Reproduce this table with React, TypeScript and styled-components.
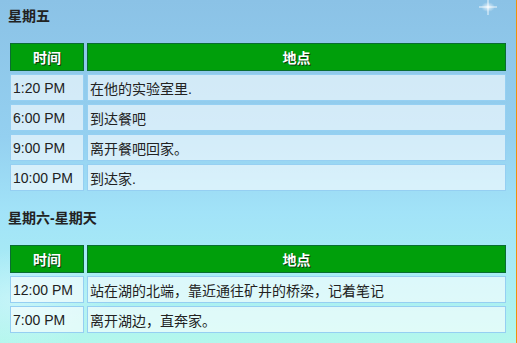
import styled, { createGlobalStyle } from 'styled-components'

const GlobalStyle = createGlobalStyle`
  html, body {
    margin: 0;
    padding: 0;
  }
  body {
    font-family: 'Liberation Sans', 'Noto Sans CJK SC', sans-serif;
  }
`

type Row = { time: string; place: string }

const friday: Row[] = [
  { time: '1:20 PM', place: '在他的实验室里.' },
  { time: '6:00 PM', place: '到达餐吧' },
  { time: '9:00 PM', place: '离开餐吧回家。' },
  { time: '10:00 PM', place: '到达家.' },
]

const weekend: Row[] = [
  { time: '12:00 PM', place: '站在湖的北端，靠近通往矿井的桥梁，记着笔记' },
  { time: '7:00 PM', place: '离开湖边，直奔家。' },
]

const Schedule = ({ title, rows, first }: { title: string; rows: Row[]; first?: boolean }) => (
  <>
    <DayTitle $first={first}>{title}</DayTitle>
    <Table>
      <thead>
        <tr>
          <HeadCell $time>时间</HeadCell>
          <HeadCell>地点</HeadCell>
        </tr>
      </thead>
      <tbody>
        {rows.map((r) => (
          <tr key={r.time}>
            <Cell>{r.time}</Cell>
            <Cell>{r.place}</Cell>
          </tr>
        ))}
      </tbody>
    </Table>
  </>
)

const App = () => {
  return (
    <>
      <GlobalStyle />
      <Page>
        <Sparkle viewBox="0 0 30 20">
          <defs>
            <radialGradient id="glow">
              <stop offset="0" stopColor="#ffffff" stopOpacity="0.8" />
              <stop offset="1" stopColor="#ffffff" stopOpacity="0" />
            </radialGradient>
          </defs>
          <ellipse cx="15" cy="10" rx="7" ry="5" fill="url(#glow)" />
          <rect x="6" y="9.4" width="18" height="1.2" fill="#ffffff" opacity="0.7" />
          <rect x="14.4" y="2" width="1.2" height="16" fill="#ffffff" opacity="0.7" />
        </Sparkle>
        <Schedule title="星期五" rows={friday} first />
        <Schedule title="星期六-星期天" rows={weekend} />
      </Page>
    </>
  )
}

const Page = styled.div`
  position: relative;
  box-sizing: border-box;
  width: 517px;
  height: 343px;
  overflow: hidden;
  padding: 6px 10px 0 8px;
  border-right: 1px solid #f0900a;
  background:
    radial-gradient(ellipse 90px 50px at 20px 300px, rgba(220, 248, 255, 0.55), rgba(220, 248, 255, 0) 100%),
    linear-gradient(
      to bottom,
      #8bc2e6 0%,
      #94d0f0 40%,
      #a2e3f8 62%,
      #a9edf4 82%,
      #b3f7ec 100%
    );
`

const Sparkle = styled.svg`
  position: absolute;
  top: -3px;
  right: 13px;
  width: 30px;
  height: 20px;
`

const DayTitle = styled.h3<{ $first?: boolean }>`
  margin: ${(p) => (p.$first ? '0' : '14px')} 0 0;
  font-size: 14px;
  font-weight: bold;
  line-height: 20px;
  color: #222222;
`

const Table = styled.table`
  margin: 14px 0 0 -1px;
  width: 502px;
  border-collapse: separate;
  border-spacing: 3px;
  font-size: 14px;
`

const HeadCell = styled.th<{ $time?: boolean }>`
  box-sizing: border-box;
  width: ${(p) => (p.$time ? '74px' : 'auto')};
  height: 28px;
  padding: 0;
  background: #009f0b;
  border: 1px solid #0a6d32;
  color: #ffffff;
  font-weight: bold;
  font-size: 14px;
  text-align: center;
  text-shadow: 1px 1px 0 #0b3a12;
`

const Cell = styled.td`
  box-sizing: border-box;
  height: 27px;
  padding: 0 2px;
  background: rgba(255, 255, 255, 0.6);
  border: 1px solid #95cff2;
  color: #222222;
  white-space: nowrap;
`

export default App
